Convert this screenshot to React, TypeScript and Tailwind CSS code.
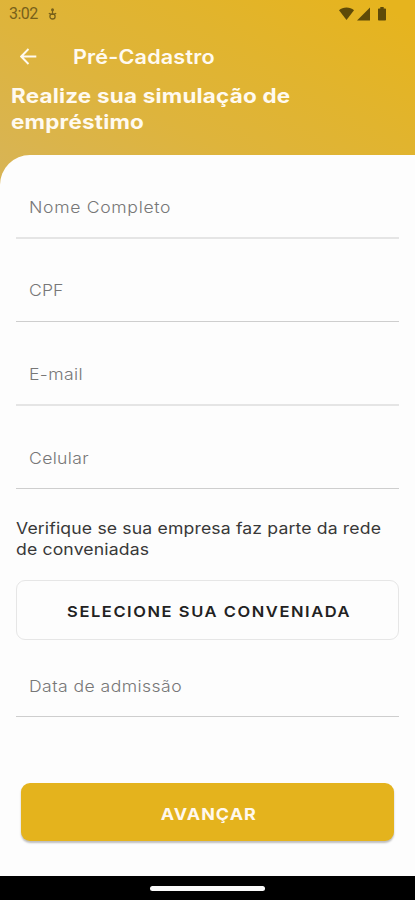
import { clsx } from "clsx";

function StatusBar() {
  return (
    <div className="flex h-7 items-center justify-between pl-[9px] pr-[29px] text-[#77601a]">
      <div className="flex items-center gap-[10px]">
        <span className="font-[Roboto] text-[16px] leading-none tracking-[-0.5px]">3:02</span>
        <svg width="9" height="12" viewBox="0 0 9 12" fill="none" aria-hidden="true">
          <circle cx="4.5" cy="1.8" r="1.5" fill="currentColor" />
          <path d="M.8 5.2l2.4 1.2h2.6l2.4-1.2M4.5 3v3.4" stroke="currentColor" strokeWidth="1.2" />
          <circle cx="4.5" cy="8.4" r="2.6" stroke="currentColor" strokeWidth="1.3" />
        </svg>
      </div>
      <div className="flex items-center text-[#5e4a08]">
        <svg width="15" height="14" viewBox="0 0 15 14" fill="currentColor" aria-hidden="true">
          <path d="M0 3.2C2 1.3 4.6.4 7.5.4S13 1.3 15 3.2L7.5 13z" />
        </svg>
        <svg className="ml-[3px]" width="13" height="14" viewBox="0 0 13 14" fill="currentColor" aria-hidden="true">
          <path d="M13 .5V13.5H0z" />
        </svg>
        <svg className="ml-[8px]" width="8" height="14" viewBox="0 0 8 14" fill="currentColor" aria-hidden="true">
          <path d="M2.3 0h3.4v1.4h1.5c.5 0 .8.3.8.8v10.5c0 .5-.3.8-.8.8H.8c-.5 0-.8-.3-.8-.8V2.2c0-.5.3-.8.8-.8h1.5z" />
        </svg>
      </div>
    </div>
  );
}

function Field({ label, className }: { label: string; className?: string }) {
  return (
    <div className={clsx("flex items-center border-[#cecece] pl-[13px]", className)}>
      <label className="origin-left scale-x-[1.1] text-[16px] font-light leading-5 text-[#777777]">{label}</label>
    </div>
  );
}

export default function App() {
  return (
    <div className="flex h-[900px] w-[415px] flex-col overflow-hidden bg-[linear-gradient(30deg,#d8b455_64%,#deb43c_77%,#e1b42e_87%,#e6b41e_98%)] font-[Inter,sans-serif]">
      <header className="h-[155px] shrink-0 text-[#fffaf0]">
        <StatusBar />
        <div className="flex h-14 items-center pl-5">
          <svg width="17" height="17" viewBox="0 0 17 17" fill="none" stroke="currentColor" strokeWidth="1.9" aria-hidden="true">
            <path d="M16.3 8.5H1.2M8.5 1L1.2 8.5l7.3 7.5" />
          </svg>
          <h1 className="ml-9 origin-left scale-x-[1.08] pt-px text-[20px] font-semibold leading-7 tracking-[0.15px]">
            Pré-Cadastro
          </h1>
        </div>
        <h2 className="-mt-px ml-[11px] w-[290px] origin-left scale-x-[1.12] text-[20px] font-bold leading-[26px] tracking-[0.2px]">
          Realize sua simulação de
          <br />
          empréstimo
        </h2>
      </header>

      <main className="flex h-[721px] shrink-0 flex-col rounded-tl-[30px] bg-[#fdfdfd] px-4">
        <Field label="Nome Completo" className="h-[84px] border-b-2 border-[#e5e5e5] pt-[21px] tracking-[0.62px]" />
        <Field label="CPF" className="h-[83px] border-b pt-[19px] tracking-[0.1px]" />
        <Field label="E-mail" className="h-[84px] border-b-2 border-[#e5e5e5] pt-[22px] tracking-[0.35px]" />
        <Field label="Celular" className="h-[83px] border-b pt-[22px] tracking-[0.3px]" />

        <p className="mt-[29px] origin-left scale-x-[1.1] whitespace-nowrap text-[16px] leading-[21px] tracking-[0.14px] text-[#383838]">
          Verifique se sua empresa faz parte da rede
          <br />
          de conveniadas
        </p>

        <button className="mt-[20px] flex h-[60px] shrink-0 items-center justify-center rounded-[9px] border border-[#e6e6e6] pl-[3px] pt-[3px] text-[#222222]">
          <span className="scale-x-[1.1] whitespace-nowrap text-[15px] font-semibold leading-5 tracking-[1.42px]">
            SELECIONE SUA CONVENIADA
          </span>
        </button>

        <Field label="Data de admissão" className="h-[77px] border-b border-[#bebebe] pt-[15px] tracking-[0.4px]" />

        <button className="mx-[5px] mt-[66px] flex h-[58px] shrink-0 items-center justify-center rounded-[9px] bg-[#e4b31d] pl-[3px] pt-[3px] text-[#fff8ee] shadow-[0_2px_2px_rgba(0,0,0,0.25)]">
          <span className="scale-x-[1.12] text-[16px] font-bold leading-5 tracking-[0.9px]">AVANÇAR</span>
        </button>
      </main>

      <footer className="flex h-6 shrink-0 items-center justify-center bg-black">
        <div className="h-[5px] w-[115px] rounded-full bg-[#fafafa]" />
      </footer>
    </div>
  );
}
